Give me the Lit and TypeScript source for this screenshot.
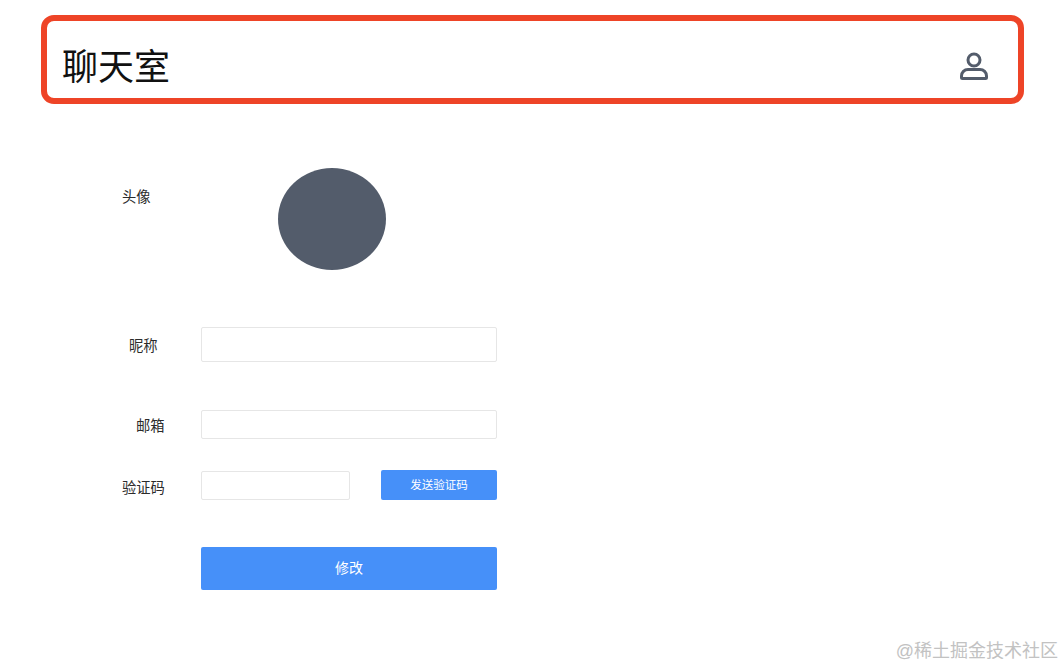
import { LitElement, html, css } from "lit";
import { customElement } from "lit/decorators.js";

@customElement("app-root")
export class AppRoot extends LitElement {
  static styles = css`
    :host {
      display: block;
      position: relative;
      width: 1064px;
      height: 668px;
      overflow: hidden;
      background: #fff;
      font-family: "Liberation Sans", "Noto Sans CJK SC", sans-serif;
      color: #222;
    }
    .page { padding: 15px 40px 0 41px; }
    .header {
      box-sizing: border-box;
      height: 89px;
      border: 6px solid #ee4427;
      border-radius: 13px;
      display: flex;
      align-items: center;
      justify-content: space-between;
      padding: 0 27px 0 15px;
    }
    .title { font-size: 36px; color: #111; line-height: 1; padding-top: 16px; }
    .user { display: block; width: 34px; height: 34px; margin-top: 14px; }
    .form { margin: 64px 0 0 81px; width: 376px; }
    .row { display: flex; }
    .label { font-size: 14.3px; line-height: 20px; color: #2b2b2b; width: 79px; flex: none; }
    .avatar-row { height: 102px; }
    .avatar-row .label { margin-top: 19px; }
    .avatar { width: 108px; height: 102px; border-radius: 50%; background: #535c6b; margin-left: 77px; }
    .name-row { margin-top: 57px; align-items: center; }
    .name-row .label { padding-left: 7px; box-sizing: border-box; padding-top: 2px; }
    .mail-row { margin-top: 48px; }
    .mail-row .label { padding-left: 14px; box-sizing: border-box; padding-top: 6px; }
    .code-row { margin-top: 31px; align-items: flex-start; }
    .code-row .label { padding-top: 8px; }
    .field {
      box-sizing: border-box;
      display: block;
      padding: 0 8px;
      margin: 0;
      background: #fff;
      border: 1px solid #e6e6e6;
      border-radius: 2px;
      outline: none;
      font: inherit;
    }
    .wide { width: 296px; }
    .name-input { height: 35px; }
    .mail-input { height: 29px; }
    .code-input { width: 149px; height: 29px; margin-top: 1px; }
    .btn {
      box-sizing: border-box;
      display: block;
      margin: 0;
      padding: 0 0 4px;
      border: none;
      border-radius: 2px;
      background: #4690f9;
      color: #fff;
      font-family: inherit;
    }
    .send { width: 116px; height: 30px; font-size: 11.5px; margin-left: 31px; padding-bottom: 2px; }
    .submit-row { margin-top: 47px; padding-left: 79px; }
    .submit { width: 296px; height: 43px; font-size: 14px; }
    .watermark {
      position: absolute;
      right: 6px;
      top: 640px;
      font-size: 18px;
      line-height: 22px;
      color: #c2c2c2;
      white-space: nowrap;
    }
  `;

  render() {
    return html`
      <div class="page">
        <header class="header">
          <div class="title">聊天室</div>
          <svg class="user" viewBox="0 0 34 34" fill="none" stroke="#535c6b" stroke-width="3" stroke-linecap="round" stroke-linejoin="round">
            <circle cx="17" cy="10" r="6" />
            <path d="M11 19.5h12a6.5 6.5 0 0 1 6.5 6.5v1.5a1 1 0 0 1-1 1h-23a1 1 0 0 1-1-1V26a6.5 6.5 0 0 1 6.5-6.5z" />
          </svg>
        </header>
        <div class="form">
          <div class="row avatar-row">
            <div class="label">头像</div>
            <div class="avatar"></div>
          </div>
          <div class="row name-row">
            <div class="label">昵称</div>
            <input class="field wide name-input" />
          </div>
          <div class="row mail-row">
            <div class="label">邮箱</div>
            <input class="field wide mail-input" />
          </div>
          <div class="row code-row">
            <div class="label">验证码</div>
            <input class="field code-input" />
            <button class="btn send">发送验证码</button>
          </div>
          <div class="row submit-row">
            <button class="btn submit">修改</button>
          </div>
        </div>
      </div>
      <div class="watermark">@稀土掘金技术社区</div>
    `;
  }
}
